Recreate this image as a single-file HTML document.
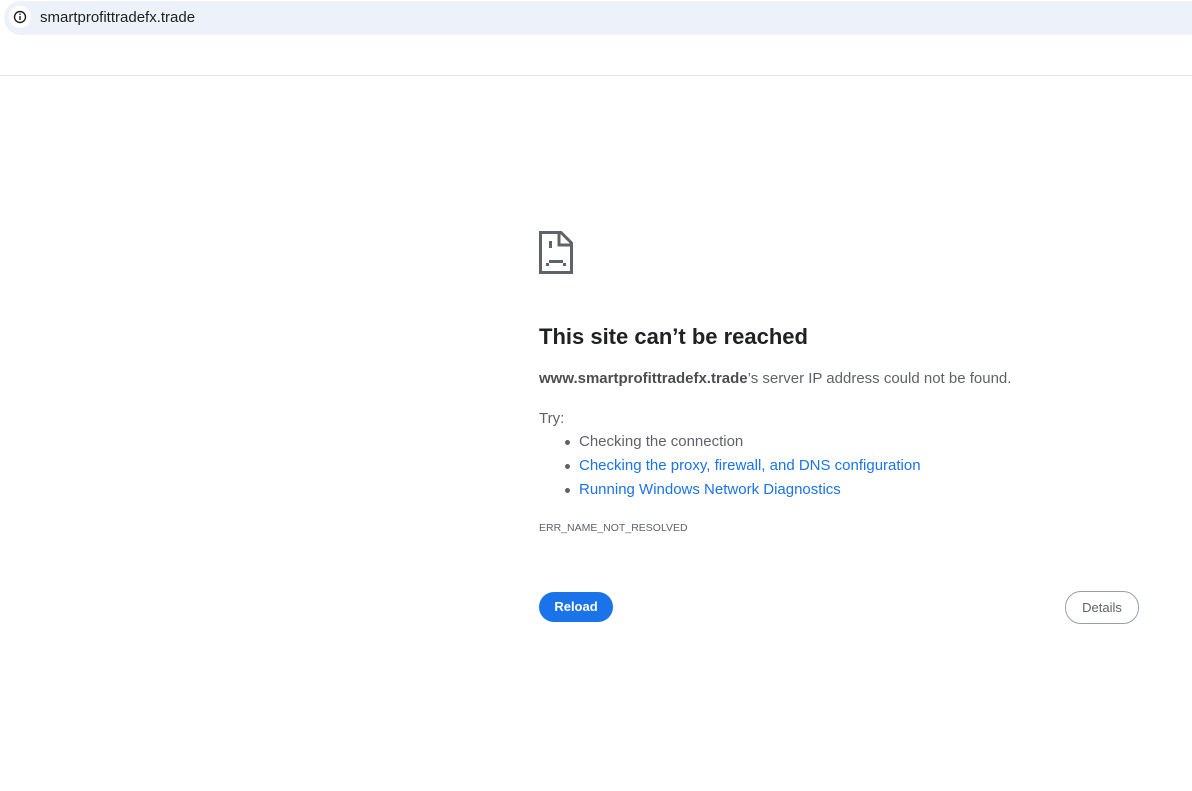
<!DOCTYPE html>
<html><head><meta charset="utf-8"><style>
body{margin:0;width:1192px;height:791px;background:#fff;font-family:"Liberation Sans",sans-serif;position:relative;overflow:hidden}
.bar{position:absolute;left:4px;top:1px;width:1200px;height:34px;background:#edf2fa;border-radius:17px 0 0 17px}
.ic{position:absolute;left:9px;top:6px;width:22px;height:22px;border-radius:50%;background:#fff}
.url{position:absolute;left:40px;top:9px;font-size:15px;color:#1f1f1f}
.sep{position:absolute;left:0;top:75px;width:1192px;height:1px;background:#e3e3e3}
.a{position:absolute;left:539px}
h1{position:absolute;left:539px;top:324px;margin:0;font-size:22px;font-weight:bold;color:#202124}
.t{font-size:15px;color:#5f6368}
ul{margin:0;padding:0;list-style:none}
li{position:absolute;left:579px;font-size:15px}
li:before{content:"";position:absolute;left:-14px;top:7px;width:5px;height:5px;border-radius:50%;background:#5f6368}
.l{color:#1a73e8}
.btn1{position:absolute;left:539px;top:592px;width:74px;height:30px;border-radius:15px;background:#1a73e8;color:#fff;font-size:13px;font-weight:bold;text-align:center;line-height:30px}
.btn2{position:absolute;left:1065px;top:591px;width:72px;height:31px;border:1px solid #9aa0a6;border-radius:16px;color:#5f6368;font-size:13px;text-align:center;line-height:31px}
</style></head><body>
<div class="bar"></div>
<div class="ic"><svg width="22" height="22" viewBox="0 0 22 22"><circle cx="11" cy="11" r="5.5" fill="none" stroke="#1f1f1f" stroke-width="1.4"/><rect x="10.3" y="10" width="1.4" height="4" fill="#1f1f1f"/><rect x="10.3" y="7.5" width="1.4" height="1.4" fill="#1f1f1f"/></svg></div>
<div class="url">smartprofittradefx.trade</div>
<div class="sep"></div>
<svg class="a" style="top:231px" width="34" height="44" viewBox="0 0 34 44">
<path d="M1.5 1.5H22L32.5 12V41.5H1.5Z" fill="none" stroke="#5f6368" stroke-width="3"/>
<path d="M20 1.5V14H32.5" fill="none" stroke="#5f6368" stroke-width="3"/>
<rect x="10" y="10" width="3" height="7" fill="#5f6368"/>
<rect x="10" y="29" width="14" height="3" fill="#5f6368"/>
<rect x="7" y="32" width="3" height="3" fill="#5f6368"/>
<rect x="24" y="32" width="3" height="3" fill="#5f6368"/>
</svg>
<h1>This site can’t be reached</h1>
<div class="a t" style="top:370px"><b style="color:#202124;opacity:.8">www.smartprofittradefx.trade</b>’s server IP address could not be found.</div>
<div class="a t" style="top:410px">Try:</div>
<ul>
<li class="t" style="top:433px">Checking the connection</li>
<li class="l" style="top:457px">Checking the proxy, firewall, and DNS configuration</li>
<li class="l" style="top:481px">Running Windows Network Diagnostics</li>
</ul>
<div class="a" style="top:522px;font-size:10.5px;color:#5f6368">ERR_NAME_NOT_RESOLVED</div>
<div class="btn1">Reload</div>
<div class="btn2">Details</div>
</body></html>
